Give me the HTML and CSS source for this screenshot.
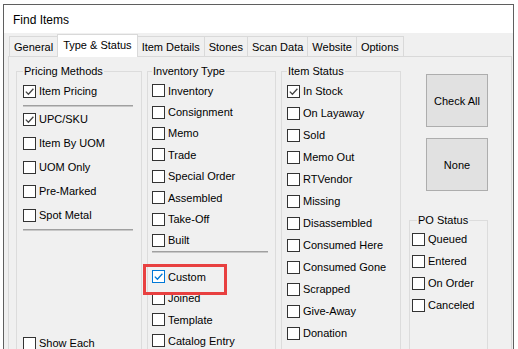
FILE: index.html
```html
<!DOCTYPE html>
<html lang="en">
<head>
    <meta charset="UTF-8">
    <title>Find Items</title>
    <link rel="stylesheet" href="styles.css">
</head>
<body>

<div class="window">
    <div class="titlebar">Find Items</div>

    <div class="content">
        <!-- Tab strip -->
        <div class="tabs">
            <div class="tab">General</div>
            <div class="tab active">Type &amp; Status</div>
            <div class="tab">Item Details</div>
            <div class="tab">Stones</div>
            <div class="tab">Scan Data</div>
            <div class="tab">Website</div>
            <div class="tab">Options</div>
        </div>

        <div class="panel">
            <!-- Pricing Methods -->
            <fieldset class="group pricing">
                <legend>Pricing Methods</legend>
                <div class="check first"><span class="box checked"><svg viewBox="0 0 11 11" width="11" height="11"><path d="M1.8 5.6l2.6 2.6 5-5.4"/></svg></span>Item Pricing</div>
                <div class="sep"></div>
                <div class="check"><span class="box checked"><svg viewBox="0 0 11 11" width="11" height="11"><path d="M1.8 5.6l2.6 2.6 5-5.4"/></svg></span>UPC/SKU</div>
                <div class="check"><span class="box"></span>Item By UOM</div>
                <div class="check"><span class="box"></span>UOM Only</div>
                <div class="check"><span class="box"></span>Pre-Marked</div>
                <div class="check"><span class="box"></span>Spot Metal</div>
                <div class="sep bottom"></div>
                <div class="check"><span class="box"></span>Show Each</div>
            </fieldset>

            <!-- Inventory Type -->
            <fieldset class="group inventory">
                <legend>Inventory Type</legend>
                <div class="check"><span class="box"></span>Inventory</div>
                <div class="check"><span class="box"></span>Consignment</div>
                <div class="check"><span class="box"></span>Memo</div>
                <div class="check"><span class="box"></span>Trade</div>
                <div class="check"><span class="box"></span>Special Order</div>
                <div class="check"><span class="box"></span>Assembled</div>
                <div class="check"><span class="box"></span>Take-Off</div>
                <div class="check"><span class="box"></span>Built</div>
                <div class="sep"></div>
                <div class="check custom"><span class="box checked focus"><svg viewBox="0 0 11 11" width="11" height="11"><path d="M1.8 5.6l2.6 2.6 5-5.4"/></svg></span>Custom</div>
                <div class="check"><span class="box"></span>Joined</div>
                <div class="check"><span class="box"></span>Template</div>
                <div class="check"><span class="box"></span>Catalog Entry</div>
            </fieldset>

            <!-- Item Status -->
            <fieldset class="group status">
                <legend>Item Status</legend>
                <div class="check"><span class="box checked"><svg viewBox="0 0 11 11" width="11" height="11"><path d="M1.8 5.6l2.6 2.6 5-5.4"/></svg></span>In Stock</div>
                <div class="check"><span class="box"></span>On Layaway</div>
                <div class="check"><span class="box"></span>Sold</div>
                <div class="check"><span class="box"></span>Memo Out</div>
                <div class="check"><span class="box"></span>RTVendor</div>
                <div class="check"><span class="box"></span>Missing</div>
                <div class="check"><span class="box"></span>Disassembled</div>
                <div class="check"><span class="box"></span>Consumed Here</div>
                <div class="check"><span class="box"></span>Consumed Gone</div>
                <div class="check"><span class="box"></span>Scrapped</div>
                <div class="check"><span class="box"></span>Give-Away</div>
                <div class="check"><span class="box"></span>Donation</div>
            </fieldset>

            <div class="side">
                <button class="btn">Check All</button>
                <button class="btn">None</button>

                <fieldset class="group po">
                    <legend>PO Status</legend>
                    <div class="check"><span class="box"></span>Queued</div>
                    <div class="check"><span class="box"></span>Entered</div>
                    <div class="check"><span class="box"></span>On Order</div>
                    <div class="check"><span class="box"></span>Canceled</div>
                </fieldset>
            </div>
        </div>
    </div>
</div>

</body>
</html>
```

FILE: styles.css
```css
* {
    box-sizing: border-box;
}
html, body {
    margin: 0;
    height: 100%;
    overflow: hidden;
    background: #fff;
}
body {
    font-family: "Liberation Sans", Arial, sans-serif;
    font-size: 11px;
    color: #000;
}
.window {
    margin: 4px 0 0 3px;
    width: 511px;
    height: 345px;
    overflow: hidden;
    border: 1px solid #5f5f5f;
    border-bottom: none;
    background: #f0f0f0;
}
.titlebar {
    height: 28px;
    padding: 1px 0 0 9px;
    background: #fff;
    font-size: 12px;
    line-height: 28px;
}
.content {
    padding: 1px 1px 0 4px;
}

/* tabs */
.tabs {
    display: flex;
    align-items: flex-end;
    height: 23px;
    margin-bottom: -1px;
    padding-left: 2px;
    position: relative;
    z-index: 1;
}
.tab {
    height: 20px;
    margin: 0 0 1px -1px;
    padding: 1px 4px 0;
    border: 1px solid #d9d9d9;
    border-bottom: none;
    background: #f0f0f0;
    line-height: 19px;
    white-space: nowrap;
}
.tab.active {
    height: 23px;
    margin-bottom: 0;
    padding: 0 5px;
    background: #fff;
    line-height: 20px;
    position: relative;
}

/* panel */
.panel {
    display: flex;
    align-items: flex-start;
    height: 320px;
    padding-left: 7px;
    border: 1px solid #d9d9d9;
    background: #f0f0f0;
}
.group {
    margin: 7px 0 0;
    padding: 1px 0 20px;
    min-width: 0;
    border: 1px solid #dcdcdc;
}
.group legend {
    padding: 0 1px;
    line-height: 15px;
}
.pricing {
    width: 126px;
    padding-left: 6px;
}
.inventory {
    width: 129px;
    margin-left: 5px;
    padding-left: 4px;
}
.status {
    width: 120px;
    margin-left: 5px;
    padding-left: 5px;
}
.side {
    width: 79px;
    margin-left: 8px;
    display: flex;
    flex-direction: column;
    align-items: flex-end;
}
.btn {
    width: 62px;
    height: 53px;
    margin-top: 17px;
    padding: 0;
    border: 1px solid #adadad;
    background: #e1e1e1;
    font: inherit;
    color: #000;
}
.btn + .btn {
    margin-top: 11px;
}
.po {
    width: 79px;
    margin-top: 22px;
    padding: 0 0 40px 2px;
}
.po legend {
    margin-left: 5px;
}

/* checkboxes */
.check {
    display: flex;
    align-items: center;
    height: 22px;
    white-space: nowrap;
}
.pricing .check {
    height: 24px;
}
.pricing .check.first {
    height: 22px;
}
.inventory .check {
    height: 21.4px;
}
.box {
    flex: none;
    display: flex;
    align-items: center;
    justify-content: center;
    width: 13px;
    height: 13px;
    margin-right: 3px;
    border: 1px solid #333;
    background: #fff;
}
.box svg path {
    fill: none;
    stroke: #444;
    stroke-width: 1.3;
}
.box.focus {
    border-color: #0078d7;
}
.box.focus svg path {
    stroke: #0078d7;
}
.sep {
    height: 2px;
    background: #a0a0a0;
    border-bottom: 1px solid #c8c8c8;
}
.pricing .sep {
    width: 110px;
    margin: 3px 0 0;
}
.pricing .sep.bottom {
    margin: 2px 0 100px;
}
.inventory .sep {
    width: 116px;
    margin: 0 0 13px;
}
.custom {
    position: relative;
}
.custom::after {
    content: "";
    position: absolute;
    left: -9px;
    top: -2px;
    width: 78px;
    height: 25px;
    border: 3px solid #e84040;
}
```
